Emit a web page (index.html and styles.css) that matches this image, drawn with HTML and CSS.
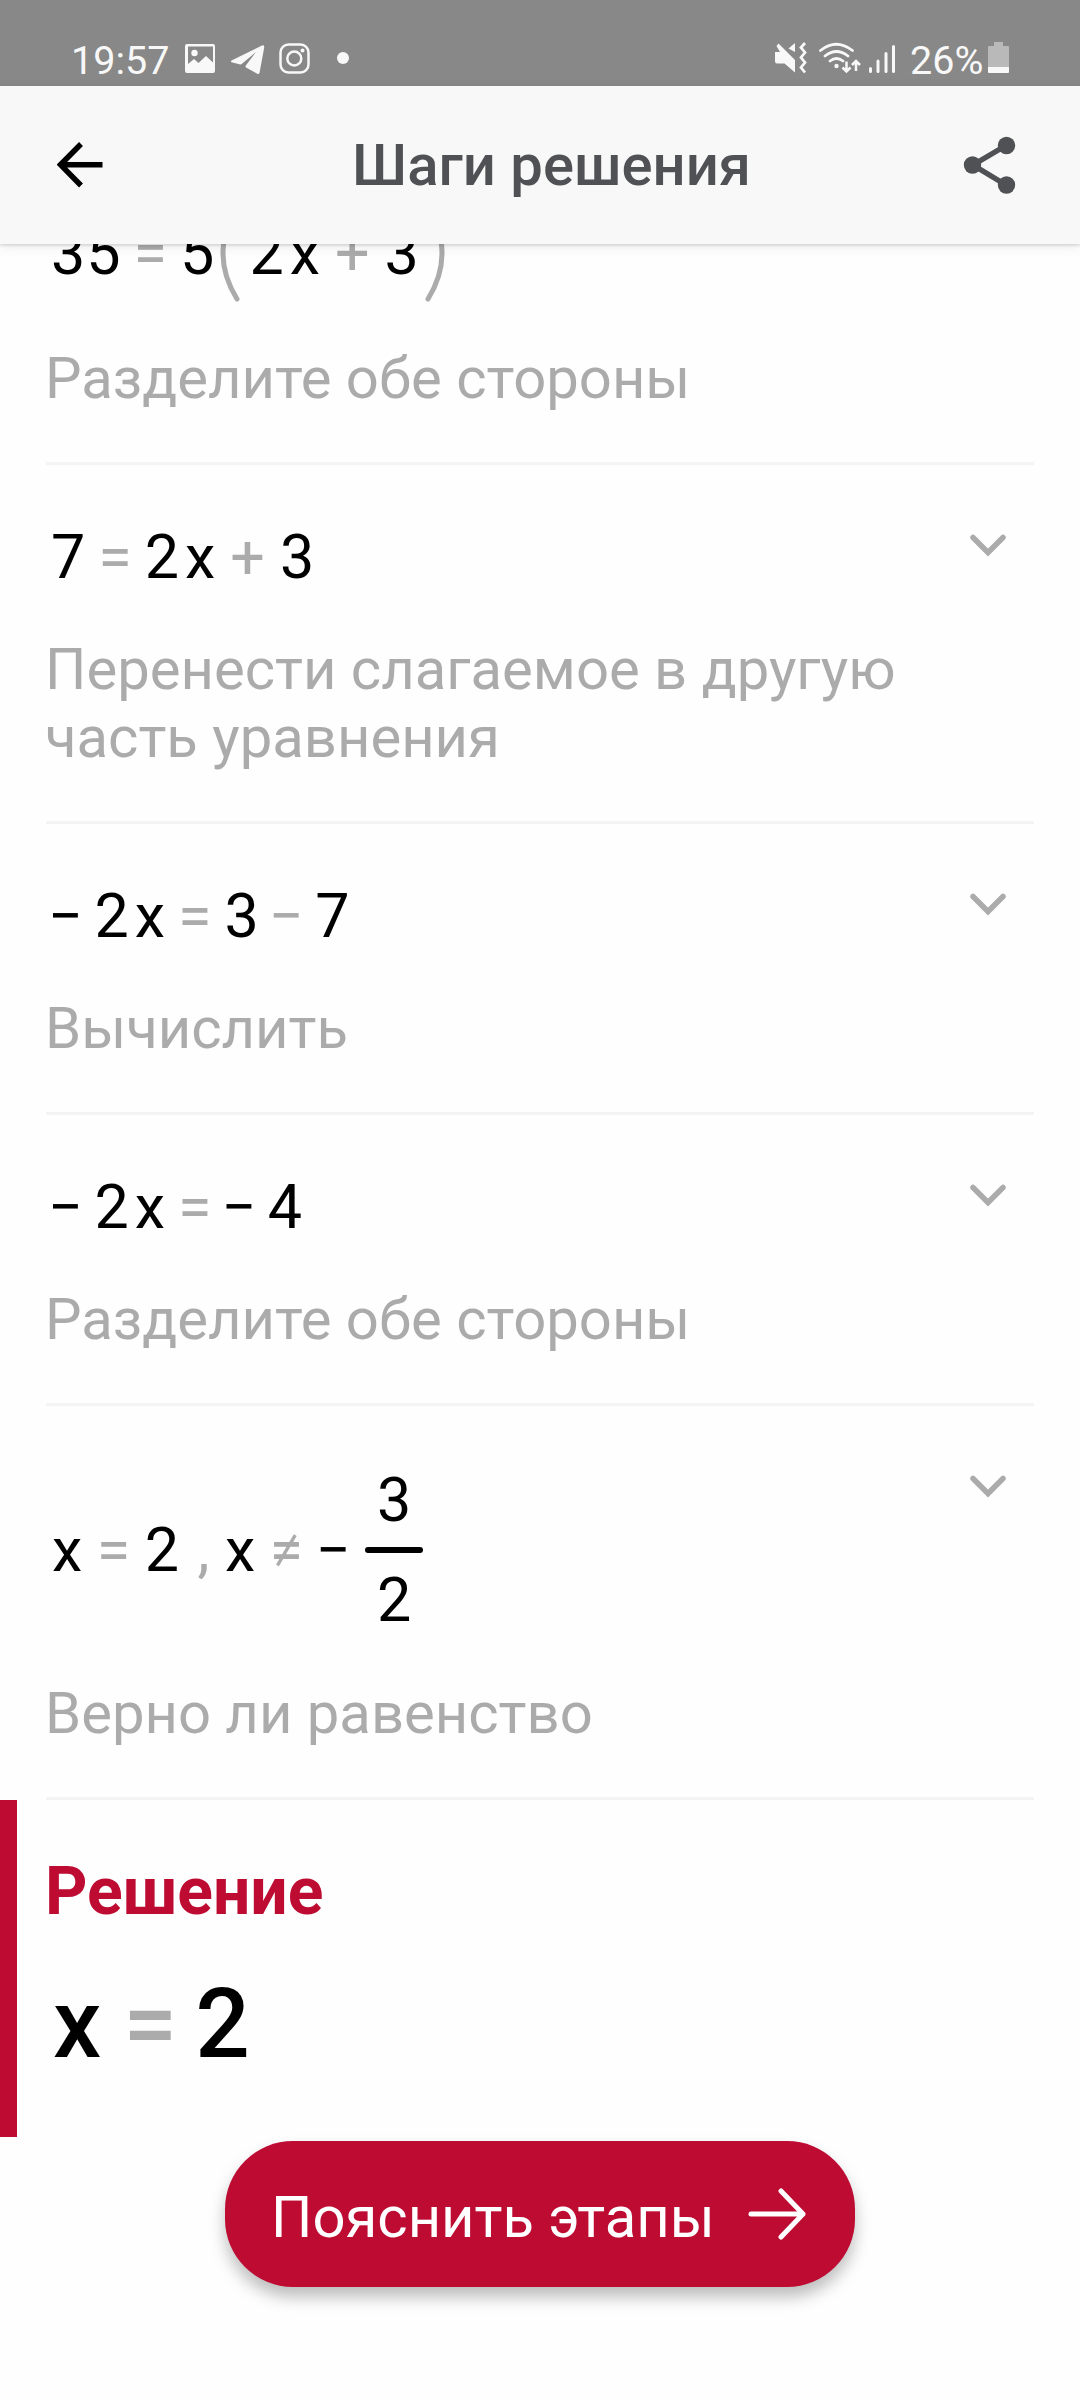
FILE: index.html
```
<!DOCTYPE html>
<html lang="ru">
<head>
<meta charset="utf-8">
<title>Шаги решения</title>
<link rel="stylesheet" href="styles.css">
</head>
<body>
<div class="screen">
  <div class="status">
    <span class="clock">19:57</span>
    <svg class="notices" width="170" height="34" viewBox="184 41 170 34">
      <path fill="#f8f8f8" fill-rule="evenodd" d="M187 44h26a2 2 0 0 1 2 2v25a2 2 0 0 1-2 2h-26a2 2 0 0 1-2-2v-25a2 2 0 0 1 2-2zM188 46.500v17.500l6-5 4.500 4 7.500-7 7 6.500v-16z"/>
      <circle cx="194.500" cy="53" r="3.200" fill="#f8f8f8"/>
      <path fill="#f8f8f8" d="M231.500 60.500 262 45.500q2.500-1 2.200 2L259.500 73q-.6 1.500-2.200.8L246 67.500q-1-1 0-2.200L256 52l-14 11.800q-1.200 1-2.500.5L231.500 62.300q-1-.9 0-1.800z"/>
      <g fill="none" stroke="#f8f8f8" stroke-width="2.500"><rect x="280.500" y="44.500" width="28" height="28" rx="8"/><circle cx="294.300" cy="58.500" r="7"/></g>
      <circle cx="302.500" cy="50.500" r="2" fill="#f8f8f8"/>
      <circle cx="343" cy="58" r="6" fill="#f8f8f8"/>
    </svg>
    <svg class="signals" width="124" height="34" viewBox="774 41 124 34">
      <path fill="#f8f8f8" d="M775 52h5l-3.500-6 2-2.500L795 60v12.500L784.500 63.500H777q-2 0-2-2zM788.500 48.500l6.500-5.500v9z"/>
      <path fill="none" stroke="#f8f8f8" stroke-width="2.800" d="m805 43-4 4.500 4 5-4 5 4 5-4 5 4 5"/>
      <g fill="none" stroke="#f8f8f8" stroke-width="2.800" stroke-linecap="round"><path d="M820.500 50.500q15.500-12.500 32 0M825 56q11.500-9 23 0M830 61q6.500-5 13 0"/></g>
      <circle cx="836.500" cy="66" r="2.200" fill="#f8f8f8"/>
      <path fill="none" stroke="#f8f8f8" stroke-width="2.500" d="M846.500 61.500v10M842.500 67.500l4 4 4-4M856 71v-10M852 65l4-4 4 4"/>
      <g stroke="#f8f8f8" stroke-width="3" stroke-linecap="round"><path d="M870.500 68.500v3M878 61v10.500M886 53.500v18M893.500 46.500v25"/></g>
    </svg>
    <span class="percent">26%</span>
    <svg class="battery" width="22" height="32" viewBox="0 0 22 32">
      <path fill="#b9b9b9" d="M6 0h9v4h5q1 0 1 1v20H0V5q0-1 1-1h5z"/>
      <path fill="#f8f8f8" d="M0 25h21v5q0 1-1 1H1q-1 0-1-1z"/>
    </svg>
  </div>
  <header class="header">
    <svg width="46" height="46" viewBox="0 0 46 46"><path d="M24 2 3.500 22.700 24 43.500M4 22.700h41.500" fill="none" stroke="#000" stroke-width="5.500"/></svg>
    <h1 class="title">Шаги решения</h1>
    <svg width="54" height="58" viewBox="0 0 54 58"><path d="M43 9.500 10 29l33 20" fill="none" stroke="#4f5154" stroke-width="5.500"/><g fill="#4f5154"><circle cx="43.500" cy="9.500" r="8.700"/><circle cx="9.500" cy="29" r="8.700"/><circle cx="43.500" cy="49" r="8.700"/></g></svg>
  </header>
  <main class="steps">
    <section class="step first">
      <div class="eq"><span>3</span><span class="tight">5</span><span class="op">=</span><span>5</span><svg class="paren" width="20" height="97" viewBox="0 0 20 97"><path d="M17 3Q-11 48.500 17 94" fill="none" stroke="#ababab" stroke-width="5" stroke-linecap="round"/></svg><span>2</span><span class="v">x</span><span class="op plus">+</span><span>3</span><svg class="paren close" width="20" height="97" viewBox="0 0 20 97"><path d="M3 3Q31 48.500 3 94" fill="none" stroke="#ababab" stroke-width="5" stroke-linecap="round"/></svg></div>
      <p class="note">Разделите обе стороны</p>
    </section>
    <section class="step">
      <div class="eq"><span>7</span><span class="op">=</span><span>2</span><span class="v">x</span><span class="op plus">+</span><span>3</span></div>
      <svg class="chevron" width="36" height="24" viewBox="0 0 36 24"><path d="M3 3.500 18 18.500 33 3.500" fill="none" stroke="#ababab" stroke-width="5.500" stroke-linecap="round"/></svg>
      <p class="note">Перенести слагаемое в другую<br>часть уравнения</p>
    </section>
    <section class="step">
      <div class="eq"><span class="neg">−</span><span>2</span><span class="v">x</span><span class="op">=</span><span>3</span><span class="op neg">−</span><span>7</span></div>
      <svg class="chevron" width="36" height="24" viewBox="0 0 36 24"><path d="M3 3.500 18 18.500 33 3.500" fill="none" stroke="#ababab" stroke-width="5.500" stroke-linecap="round"/></svg>
      <p class="note">Вычислить</p>
    </section>
    <section class="step">
      <div class="eq"><span class="neg">−</span><span>2</span><span class="v">x</span><span class="op">=</span><span class="neg">−</span><span>4</span></div>
      <svg class="chevron" width="36" height="24" viewBox="0 0 36 24"><path d="M3 3.500 18 18.500 33 3.500" fill="none" stroke="#ababab" stroke-width="5.500" stroke-linecap="round"/></svg>
      <p class="note">Разделите обе стороны</p>
    </section>
    <section class="step tall">
      <div class="eq"><span>x</span><span class="op">=</span><span>2</span><span class="op comma">,</span><span>x</span><span class="op">≠</span><span class="neg">−</span><span class="frac"><span>3</span><i class="rule"></i><span>2</span></span></div>
      <svg class="chevron" width="36" height="24" viewBox="0 0 36 24"><path d="M3 3.500 18 18.500 33 3.500" fill="none" stroke="#ababab" stroke-width="5.500" stroke-linecap="round"/></svg>
      <p class="note">Верно ли равенство</p>
    </section>
    <section class="answer">
      <h2 class="answer-title">Решение</h2>
      <div class="result"><span>x</span><span class="op">=</span><span>2</span></div>
    </section>
    <button class="explain"><span>Пояснить этапы</span><svg width="58" height="52" viewBox="0 0 58 52"><path d="M3 26h52M33 3l22 23-22 23" fill="none" stroke="#fff" stroke-width="5" stroke-linecap="round" stroke-linejoin="round"/></svg></button>
  </main>
</div>
</body>
</html>
```
FILE: styles.css
```
* { box-sizing: border-box; }
body { margin: 0; background: #fefefe; font-family: Roboto, sans-serif; color: #000; }
h1, h2, p { margin: 0; }
svg { display: block; flex: none; }

.screen { width: 1080px; height: 2400px; overflow: hidden; display: flex; flex-direction: column; }

.status { height: 86px; flex: none; background: #888; color: #f8f8f8; display: flex; align-items: flex-start; padding: 37px 70px 0 71px; font-size: 39.5px; line-height: 47px; position: relative; z-index: 2; }
.clock { width: 113px; white-space: nowrap; }
.notices, .signals { margin-top: 4px; }
.signals { margin-left: auto; }
.percent { margin-left: 12px; width: 78px; }
.battery { margin-top: 5px; }

.header { height: 158px; flex: none; background: #f8f8f8; display: flex; align-items: center; justify-content: space-between; padding: 0 63px 0 57px; position: relative; z-index: 2; box-shadow: 0 2px 2px rgba(0,0,0,.1), 0 3px 12px rgba(0,0,0,.08); }
.title { margin-left: 37px; font-size: 58px; font-weight: 500; line-height: 68px; color: #4f5154; white-space: nowrap; }

.steps { flex: none; height: 2156px; overflow: hidden; }
.step { height: 291px; margin: 0 46px; border-bottom: 3px solid #f4f4f4; display: grid; grid-template-columns: 1fr 36px; grid-template-rows: 170px auto; padding-right: 28px; }
.step.first { margin-top: -70px; }
.step:nth-child(2) { height: 359px; }
.step.tall { height: 394px; grid-template-rows: 273px auto; }

.eq { display: flex; align-items: center; gap: 13px; height: 70px; margin-top: 57px; padding-left: 5px; font-size: 61px; line-height: 70px; white-space: nowrap; }
.eq .op, .result .op { color: #ababab; }
.first .eq { margin-top: 44px; }
.v { margin-left: -7px; }
.tight { margin-left: -12px; }
.plus { margin: 0 2px; }
.neg { margin: 0 -1.5px 0 -3px; }
.comma { margin: 0 1px 0 4px; }
.tall .eq { margin-top: 47px; height: 194px; padding-left: 6px; gap: 14.5px; }
.tall .neg { margin: 0 0 0 -2px; }
.paren { margin: 0 -4px 0 -7px; }
.paren.close { margin: 0 0 0 -7px; }
.frac { display: flex; flex-direction: column; align-items: center; width: 58px; }
.frac span { line-height: 94px; }
.rule { width: 58px; height: 6px; border-radius: 3px; background: #000; }

.chevron { margin-top: 69px; }
.note { grid-column: 1 / 3; margin-left: -1px; font-size: 58px; line-height: 68px; color: #ababab; white-space: nowrap; }

.answer { height: 337px; border-left: 17px solid #bd0b32; padding: 54px 0 0 28px; }
.answer-title { font-size: 66px; line-height: 76px; font-weight: 700; color: #bd0b32; }
.result { display: flex; gap: 18px; padding-left: 8px; margin-top: 37px; font-size: 96px; line-height: 114px; font-weight: 500; }
.result .op { margin-left: 4px; }

.explain { margin: 4px auto 0; width: 630px; height: 146px; border: 0; border-radius: 68px; background: #bd0b32; color: #fff; display: flex; align-items: center; justify-content: space-between; padding: 0 49px 0 46px; font: 400 58px/68px Roboto, sans-serif; white-space: nowrap; box-shadow: 0 10px 16px rgba(0,0,0,.26); }
.explain span { margin-top: 6px; }
```
